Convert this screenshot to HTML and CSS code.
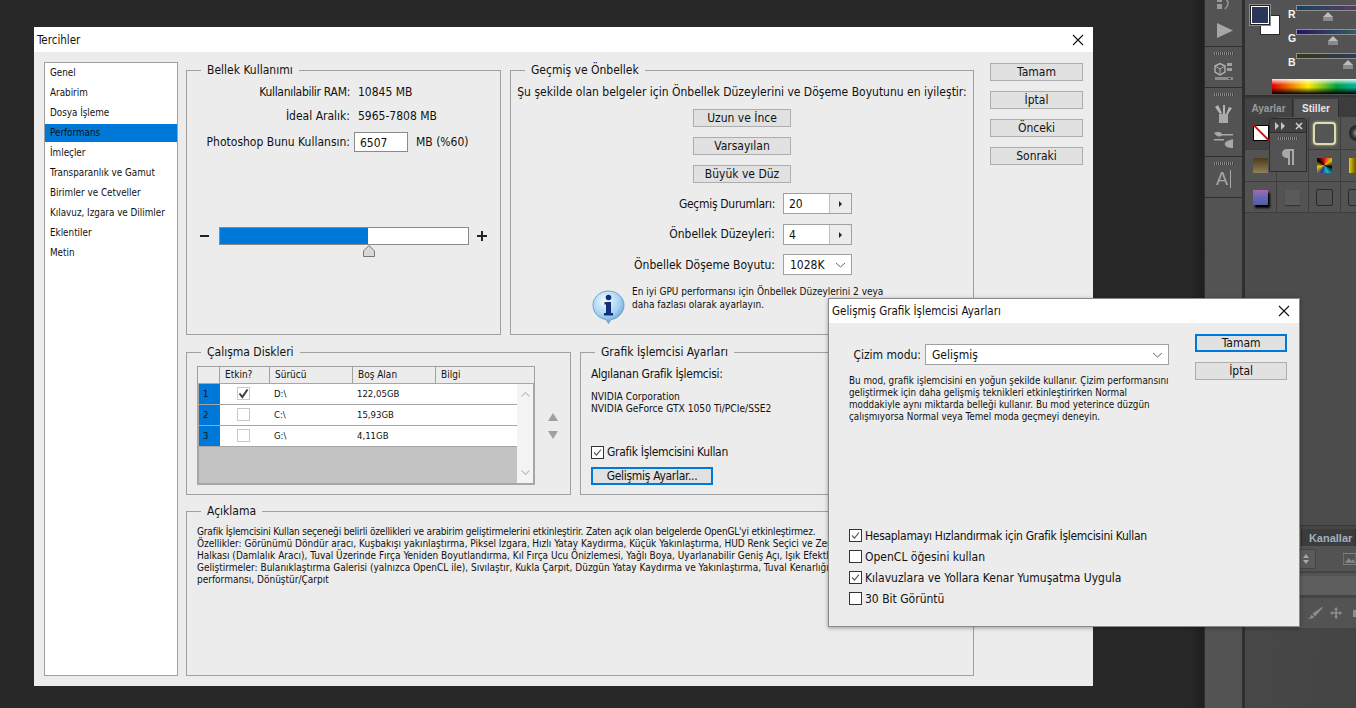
FILE: index.html
```html
<!doctype html>
<html lang="tr">
<head>
  <meta charset="utf-8">
  <title>Tercihler</title>
  <link rel="stylesheet" href="styles.css">
</head>
<body>
<svg class="defs" width="0" height="0">
  <symbol id="tick" viewBox="0 0 13 13"><path d="M2.5 6.5 L5.3 9.5 L10.5 3" fill="none" stroke="#555" stroke-width="1.3"/></symbol>
  <symbol id="tick-bold" viewBox="0 0 13 13"><path d="M2.5 6.5 L5.3 10 L10.5 2.500" fill="none" stroke="#3c3c3c" stroke-width="2"/></symbol>
  <symbol id="close" viewBox="0 0 12 12"><path d="M1 1 L11 11 M11 1 L1 11" fill="none" stroke="#111" stroke-width="1.1"/></symbol>
  <symbol id="chev" viewBox="0 0 11 6"><path d="M1 1 L5.5 5 L10 1" fill="none" stroke="#666" stroke-width="1"/></symbol>
</svg>

<div class="desktop">
  <div class="dock-shade"></div>

  <!-- araç şeridi -->
  <div class="tools">
    <div class="tool-group tg-top">
      <svg width="20" height="12" viewBox="0 0 20 12" class="tool-cut"><path d="M3 0h5v3H3zM3 5h5v5H3z" fill="#9a9a9a"/><path d="M12 0c3 3 3 6-1 10" fill="none" stroke="#9a9a9a" stroke-width="1.5"/></svg>
      <svg width="16" height="15" viewBox="0 0 16 15" class="tool-play"><path d="M0 0 L16 7.5 L0 15z" fill="#a6a6a6"/></svg>
    </div>
    <div class="tool-group tg-3d">
      <div class="grip"></div>
      <svg width="20" height="19" viewBox="0 0 20 19"><path d="M1 4 L6 1.5 L11 4 L11 10 L6 13 L1 10z" fill="none" stroke="#b0b0b0" stroke-width="1.4"/><path d="M1 4 L6 7 L11 4 M6 7 L6 13" fill="none" stroke="#b0b0b0"/><path d="M13 1h5v3h-5zM13 6h5v3h-5z" fill="#a0a0a0"/><path d="M1 15h18v3H1z" fill="#8c8c8c"/><path d="M14 16h3l-1.5 1.5z" fill="#222"/></svg>
    </div>
    <div class="tool-group tg-brush">
      <div class="grip"></div>
      <svg width="20" height="20" viewBox="0 0 20 20"><path d="M5 10h9v9H5z" fill="#a8a8a8"/><path d="M6 10 L1 3 L4 1 L8 9zM9 10 L9 1 L11 1 L11 10zM12 10 L15 3 L18 4 L14 10z" fill="#b4b4b4"/></svg>
      <svg width="20" height="17" viewBox="0 0 20 17"><path d="M0 1c4-2 7-1 8 1h11v1.500H8C6 5 3 5 0 1zM0 7h10v1.500H0zM19 7v9c-5 0-9-2-8-5 1-2 5-3 8-4z" fill="#a8a8a8"/></svg>
    </div>
    <div class="tool-group tg-text">
      <div class="grip"></div>
      <div class="tool-a">A<span class="tool-caret"></span></div>
    </div>
  </div>

  <!-- sağ paneller -->
  <div class="panels">
    <div class="color-panel">
      <div class="swatches">
        <div class="swatch-bg"></div>
        <div class="swatch-fg"></div>
      </div>
      <div class="channels">
        <div class="channel"><span class="channel-name">R</span><div class="channel-track track-r"></div><i class="channel-thumb"></i></div>
        <div class="channel"><span class="channel-name">G</span><div class="channel-track track-g"></div><i class="channel-thumb thumb-g"></i></div>
        <div class="channel"><span class="channel-name">B</span><div class="channel-track track-b"></div><i class="channel-thumb thumb-b"></i></div>
      </div>
      <div class="ramp"></div>
    </div>

    <div class="tabs">
      <span class="tab">Ayarlar</span>
      <span class="tab tab-on">Stiller</span>
    </div>

    <div class="styles-grid">
      <div class="style-cell cell-none"><span class="none-box"></span></div>
      <div class="style-cell"></div>
      <div class="style-cell"><span class="glow-box"></span></div>
      <div class="style-cell"><span class="ball"></span></div>
      <div class="style-cell"><span class="chip chip-brown"></span></div>
      <div class="style-cell"></div>
      <div class="style-cell"><span class="chip chip-mix"></span></div>
      <div class="style-cell"><span class="chip chip-yellow"></span></div>
      <div class="style-cell"><span class="chip chip-purple"></span></div>
      <div class="style-cell"><span class="chip chip-gray"></span></div>
      <div class="style-cell"><span class="chip chip-line"></span></div>
      <div class="style-cell"><span class="chip chip-line"></span></div>
    </div>

    <div class="mini-panel">
      <div class="mini-head">
        <svg width="12" height="8" viewBox="0 0 12 8"><path d="M1 0 L5 4 L1 8zM7 0 L11 4 L7 8z" fill="#c4c4c4"/></svg>
        <svg width="8" height="8" viewBox="0 0 8 8"><path d="M1 1 L7 7 M7 1 L1 7" stroke="#d0d0d0" stroke-width="1.600"/></svg>
      </div>
      <div class="grip mini-grip"></div>
      <svg class="mini-icon" width="12" height="16" viewBox="0 0 12 16"><path d="M5 0h7v16h-2V2H8v14H6V9C2 9 0 7 0 4.500S2 0 5 0z" fill="#a8a8a8"/></svg>
    </div>

    <div class="panel-gap"></div>

    <div class="lower-tabs">
      <span class="tab lower-on"></span>
      <span class="tab tab-channels">Kanallar</span>
    </div>
    <div class="lower-row">
      <span class="updown"><svg width="6" height="10" viewBox="0 0 6 10"><path d="M0 4 L3 0 L6 4zM0 6 L3 10 L6 6z" fill="#a8a8a8"/></svg></span>
      <svg class="pic-icon" width="14" height="12" viewBox="0 0 14 12"><path d="M0 0h14v12H0z" fill="none" stroke="#8a8a8a"/><path d="M2 10 L6 5 L9 8 L11 6 L13 10z" fill="#8a8a8a"/></svg>
    </div>
    <div class="lower-band"></div>
    <div class="lower-tools">
      <svg width="17" height="14" viewBox="0 0 17 14"><path d="M16 0 L17 1 L8 11 L5 8z M4 9 L7 12 C5 14 2 14 0 13 C2 13 3 11 4 9z" fill="#8c8c8c"/></svg>
      <svg width="14" height="14" viewBox="0 0 14 14"><path d="M7 0 L9.500 3H8v3h3V4.500L14 7l-3 2.500V8H8v3h1.500L7 14l-2.500-3H6V8H3v1.500L0 7l3-2.500V6h3V3H4.500z" fill="#8c8c8c"/></svg>
      <span class="tool-stub"></span>
    </div>
    <div class="panel-rest"></div>
  </div>
</div>

<!-- Tercihler penceresi -->
<div class="window prefs">
  <div class="titlebar">
    <span>Tercihler</span>
    <svg class="close" width="12" height="12"><use href="#close"/></svg>
  </div>
  <div class="prefs-body">
    <ul class="side-list">
      <li>Genel</li>
      <li>Arabirim</li>
      <li>Dosya İşleme</li>
      <li class="active">Performans</li>
      <li>İmleçler</li>
      <li>Transparanlık ve Gamut</li>
      <li>Birimler ve Cetveller</li>
      <li>Kılavuz, Izgara ve Dilimler</li>
      <li>Eklentiler</li>
      <li>Metin</li>
    </ul>

    <div class="prefs-main">
      <div class="group-row row-top">
        <fieldset class="group group-memory">
          <legend>Bellek Kullanımı</legend>
          <div class="memory-grid">
            <span class="label tight">Kullanılabilir RAM:</span><span class="value">10845 MB</span>
            <span class="label">İdeal Aralık:</span><span class="value">5965-7808 MB</span>
            <span class="label">Photoshop Bunu Kullansın:</span>
            <span class="memory-input"><span class="textbox">6507</span><span>MB (%60)</span></span>
          </div>
          <div class="slider">
            <svg width="9" height="3" viewBox="0 0 9 3"><path d="M0 0h9v2H0z" fill="#222"/></svg>
            <div class="slider-track">
              <div class="slider-fill" style="width:59.6%"></div>
              <svg class="slider-thumb" width="12" height="12" viewBox="0 0 12 12"><path d="M6 .5 L11.500 6 V11.500 H.5 V6z" fill="#d8d8d8" stroke="#777"/></svg>
            </div>
            <svg class="slider-plus" width="10" height="10" viewBox="0 0 10 10"><path d="M4 0h2v4h4v2H6v4H4V6H0V4h4z" fill="#222"/></svg>
          </div>
        </fieldset>

        <fieldset class="group group-history">
          <legend>Geçmiş ve Önbellek</legend>
          <p class="history-head">Şu şekilde olan belgeler için Önbellek Düzeylerini ve Döşeme Boyutunu en iyileştir:</p>
          <button class="btn btn-preset">Uzun ve İnce</button>
          <button class="btn btn-preset">Varsayılan</button>
          <button class="btn btn-preset">Büyük ve Düz</button>
          <div class="field-grid">
            <span class="label tight">Geçmiş Durumları:</span>
            <span class="spin"><span class="spin-value">20</span><span class="spin-arrow"></span></span>
            <span class="label">Önbellek Düzeyleri:</span>
            <span class="spin"><span class="spin-value">4</span><span class="spin-arrow"></span></span>
            <span class="label">Önbellek Döşeme Boyutu:</span>
            <span class="select select-small">1028K<svg width="11" height="6"><use href="#chev"/></svg></span>
          </div>
          <div class="info-row">
            <svg width="33" height="34" viewBox="0 0 33 34">
              <defs><radialGradient id="bub" cx="40%" cy="30%" r="75%"><stop offset="0" stop-color="#f4fbff"/><stop offset=".6" stop-color="#a9d2f0"/><stop offset="1" stop-color="#5c9bd1"/></radialGradient></defs>
              <path d="M16.500 1C25 1 32 7.500 32 15s-6 14-13 14.500L16.500 33.500 14 29.500C6.500 28.500 1 22.500 1 15S8 1 16.500 1z" fill="url(#bub)" stroke="#6ba3d3"/>
              <circle cx="16.500" cy="7.500" r="2.800" fill="#10307c"/>
              <path d="M12.500 12h6.500v11h2v2.500h-9V23h2V14.500h-1.500z" fill="#10307c"/>
            </svg>
            <p class="small info-text">En iyi GPU performansı için Önbellek Düzeylerini 2 veya<br>daha fazlası olarak ayarlayın.</p>
          </div>
        </fieldset>
      </div>

      <div class="group-row row-mid">
        <fieldset class="group group-disks">
          <legend>Çalışma Diskleri</legend>
          <div class="disks-wrap">
            <div class="disk-table">
              <div class="disk-head">
                <span></span><span>Etkin?</span><span>Sürücü</span><span>Boş Alan</span><span>Bilgi</span>
              </div>
              <div class="disk-body">
                <div class="disk-rows">
                  <div class="disk-row"><span class="disk-num">1</span><span class="disk-on"><span class="disk-check"><svg width="13" height="13"><use href="#tick-bold"/></svg></span></span><span>D:\</span><span>122,05GB</span></div>
                  <div class="disk-row"><span class="disk-num">2</span><span class="disk-on"><span class="disk-check"></span></span><span>C:\</span><span>15,93GB</span></div>
                  <div class="disk-row"><span class="disk-num">3</span><span class="disk-on"><span class="disk-check"></span></span><span>G:\</span><span>4,11GB</span></div>
                </div>
                <div class="disk-scroll">
                  <svg width="9" height="5" viewBox="0 0 9 5"><path d="M.5 4.500 L4.500 .5 L8.500 4.500" fill="none" stroke="#c4c4c4" stroke-width="1.300"/></svg>
                  <svg width="9" height="5" viewBox="0 0 9 5"><path d="M.5 .5 L4.500 4.500 L8.500 .5" fill="none" stroke="#c4c4c4" stroke-width="1.300"/></svg>
                </div>
              </div>
            </div>
            <div class="disk-arrows">
              <svg width="10" height="8" viewBox="0 0 10 8"><path d="M5 0 L10 8 H0z" fill="#a0a0a0"/></svg>
              <svg width="10" height="8" viewBox="0 0 10 8"><path d="M5 8 L10 0 H0z" fill="#a0a0a0"/></svg>
            </div>
          </div>
        </fieldset>

        <fieldset class="group group-gpu">
          <legend>Grafik İşlemcisi Ayarları</legend>
          <div class="gpu-found tight">Algılanan Grafik İşlemcisi:</div>
          <p class="small gpu-name">NVIDIA Corporation<br>NVIDIA GeForce GTX 1050 Ti/PCIe/SSE2</p>
          <label class="check-line gpu-check tight"><span class="check"><svg width="11" height="11"><use href="#tick"/></svg></span>Grafik İşlemcisini Kullan</label>
          <button class="btn btn-focus btn-advanced tight">Gelişmiş Ayarlar...</button>
        </fieldset>
      </div>

      <fieldset class="group group-desc">
        <legend>Açıklama</legend>
        <p class="small desc-text"><span class="desc-first">Grafik İşlemcisini Kullan seçeneği belirli özellikleri ve arabirim geliştirmelerini etkinleştirir. Zaten açık olan belgelerde OpenGL'yi etkinleştirmez.</span><br>Özellikler: Görünümü Döndür aracı, Kuşbakışı yakınlaştırma, Piksel Izgara, Hızlı Yatay Kaydırma, Küçük Yakınlaştırma, HUD Renk Seçici ve Zengin<br>Halkası (Damlalık Aracı), Tuval Üzerinde Fırça Yeniden Boyutlandırma, Kıl Fırça Ucu Önizlemesi, Yağlı Boya, Uyarlanabilir Geniş Açı, Işık Efektleri<br>Geliştirmeler: Bulanıklaştırma Galerisi (yalnızca OpenCL ile), Sıvılaştır, Kukla Çarpıt, Düzgün Yatay Kaydırma ve Yakınlaştırma, Tuval Kenarlığı için<br>performansı, Dönüştür/Çarpıt</p>
      </fieldset>
    </div>

    <div class="prefs-buttons">
      <button class="btn">Tamam</button>
      <button class="btn">İptal</button>
      <button class="btn">Önceki</button>
      <button class="btn">Sonraki</button>
    </div>
  </div>
</div>

<!-- Gelişmiş ayarlar penceresi -->
<div class="window gpu-dialog">
  <div class="titlebar dialog-title">
    <span>Gelişmiş Grafik İşlemcisi Ayarları</span>
    <svg class="close" width="12" height="12"><use href="#close"/></svg>
  </div>
  <div class="dialog-body">
    <div class="dialog-left">
      <div class="mode-row">
        <span class="mode-label">Çizim modu:</span>
        <span class="select">Gelişmiş<svg width="11" height="6"><use href="#chev"/></svg></span>
      </div>
      <p class="small mode-text">Bu mod, grafik işlemcisini en yoğun şekilde kullanır. Çizim performansını<br>geliştirmek için daha gelişmiş teknikleri etkinleştirirken Normal<br>moddakiyle aynı miktarda belleği kullanır. Bu mod yeterince düzgün<br>çalışmıyorsa Normal veya Temel moda geçmeyi deneyin.</p>
      <div class="dialog-checks">
        <label class="check-line tight"><span class="check"><svg width="11" height="11"><use href="#tick"/></svg></span>Hesaplamayı Hızlandırmak için Grafik İşlemcisini Kullan</label>
        <label class="check-line"><span class="check"></span>OpenCL öğesini kullan</label>
        <label class="check-line"><span class="check"><svg width="11" height="11"><use href="#tick"/></svg></span>Kılavuzlara ve Yollara Kenar Yumuşatma Uygula</label>
        <label class="check-line"><span class="check"></span>30 Bit Görüntü</label>
      </div>
    </div>
    <div class="dialog-buttons">
      <button class="btn btn-focus">Tamam</button>
      <button class="btn">İptal</button>
    </div>
  </div>
</div>
</body>
</html>
```

FILE: styles.css
```css
html, body {
  margin: 0;
  padding: 0;
  height: 100%;
  overflow: hidden;
  background: #282828;
}
body {
  font-family: "DejaVu Sans Condensed", "DejaVu Sans", sans-serif;
  font-size: 12px;
  color: #111;
}
p { margin: 0; }
.defs { position: absolute; }
.tight { letter-spacing: -.3px; }

/* arka plan: photoshop */
.desktop {
  height: 708px;
  display: flex;
  justify-content: flex-end;
  overflow: hidden;
}
.dock-shade {
  width: 14px;
  background: linear-gradient(90deg, #282828, #1f1f1f);
}
.tools {
  width: 41px;
  box-sizing: border-box;
  background: #535353;
  border-left: 1px solid #2e2e2e;
  border-right: 3px solid #2f2f2f;
}
.tool-group {
  display: flex;
  flex-direction: column;
  align-items: center;
  border-bottom: 1px solid #2e2e2e;
  box-sizing: border-box;
}
.tg-top { height: 47px; }
.tool-cut { margin-top: -1px; }
.tool-play { margin-top: 12px; margin-left: 2px; }
.tg-3d { height: 41px; gap: 7px; padding-top: 5px; }
.tg-brush { height: 69px; padding-top: 5px; gap: 8px; }
.tg-text { height: 41px; padding-top: 5px; }
.grip {
  width: 20px;
  height: 3px;
  flex: none;
  background: repeating-linear-gradient(90deg, #8a8a8a 0 1px, #3c3c3c 1px 2px);
}
.tool-a {
  font-family: "Liberation Sans", sans-serif;
  font-size: 18px;
  line-height: 20px;
  color: #a8a8a8;
  margin-top: 4px;
  display: flex;
  align-items: center;
}
.tool-caret {
  width: 1px;
  height: 18px;
  background: #a8a8a8;
  margin-left: 2px;
}

.panels {
  width: 111px;
  position: relative;
  display: flex;
  flex-direction: column;
  background: #4d4d4d;
  overflow: hidden;
  font-family: "Liberation Sans", sans-serif;
}
.color-panel {
  height: 97px;
  flex: none;
  box-sizing: border-box;
  background: #535353;
  border-bottom: 2px solid #333;
  position: relative;
}
.swatches {
  position: absolute;
  left: 6px;
  top: 6px;
  width: 32px;
  height: 32px;
}
.swatch-fg {
  position: absolute;
  left: 0;
  top: 0;
  width: 18px;
  height: 18px;
  box-sizing: border-box;
  background: #2d3558;
  border: 1px solid #fff;
  outline: 1px solid #222;
  box-shadow: 0 0 0 2px #8a8a8a;
}
.swatch-bg {
  position: absolute;
  left: 9px;
  top: 9px;
  width: 20px;
  height: 20px;
  box-sizing: border-box;
  background: #fff;
  border: 1px solid #2a2a2a;
}
.channels {
  margin-left: 43px;
  padding-top: 5px;
  display: flex;
  flex-direction: column;
  gap: 7px;
}
.channel {
  height: 17px;
  position: relative;
  display: flex;
  align-items: flex-start;
  color: #f4f4f4;
  font-weight: bold;
  font-size: 10.5px;
}
.channel-name { width: 15px; line-height: 15px; padding-top: 2px; box-sizing: border-box; height: 17px; }
.channel-track {
  width: 70px;
  flex: none;
  height: 4px;
  border: 1px solid #8f8f8f;
}
.track-r { background: linear-gradient(90deg, #12455f, #6b3a5f); }
.track-g { background: linear-gradient(90deg, #2d0f6a, #2d7060); }
.track-b { background: linear-gradient(90deg, #343a10, #2f3a66); }
.channel-thumb {
  position: absolute;
  left: 35px;
  top: 7px;
  width: 0;
  height: 0;
  border: 5px solid transparent;
  border-top: 0;
  border-bottom: 5px solid #bdbdbd;
}
.channel-thumb::after {
  content: "";
  position: absolute;
  left: -5px;
  top: 5px;
  width: 10px;
  height: 4px;
  background: #8a8a8a;
}
.thumb-g { left: 40px; }
.thumb-b { left: 55px; }
.ramp {
  position: absolute;
  left: 27px;
  top: 79px;
  width: 90px;
  height: 15px;
  background:
    linear-gradient(180deg, rgba(255,255,255,.9) 0, rgba(255,255,255,0) 40%, rgba(0,0,0,0) 55%, #000 100%),
    linear-gradient(90deg, #e40000 0, #ffee00 40%, #00a040 72%, #00b8c8 100%);
}
.tabs {
  height: 20px;
  flex: none;
  box-sizing: border-box;
  display: flex;
  align-items: stretch;
  background: #3c3c3c;
  padding-top: 2px;
  gap: 1px;
  font-size: 10px;
  font-weight: bold;
}
.tab {
  background: #444;
  color: #9a9a9a;
  display: flex;
  align-items: center;
  justify-content: center;
  width: 47px;
  border-right: 1px solid #2e2e2e;
}
.tab-on {
  background: #535353;
  color: #e6e6e6;
  width: 44px;
}
.styles-grid {
  flex: none;
  height: 96px;
  width: 128px;
  display: grid;
  grid-template-columns: repeat(4, 32px);
  grid-template-rows: 33px 32px 31px;
  background: #535353;
}
.style-cell {
  box-sizing: border-box;
  border-right: 1px solid #3e3e3e;
  border-bottom: 1px solid #3e3e3e;
  display: flex;
  align-items: center;
  justify-content: center;
}
.cell-none { background: #424242; }
.none-box {
  width: 14px;
  height: 14px;
  border: 1px solid #000;
  background: #fff;
  position: relative;
}
.none-box::after {
  content: "";
  position: absolute;
  left: -5px;
  top: 6px;
  width: 25px;
  height: 2px;
  background: #c81010;
  transform: rotate(45deg);
}
.glow-box {
  width: 19px;
  height: 19px;
  border-radius: 4px;
  background: #555;
  border: 2px solid #dcdcb4;
  box-shadow: 0 0 2px 1px #8a8a68;
}
.ball {
  width: 16px;
  height: 16px;
  border-radius: 50%;
  background: radial-gradient(circle, #aaa 0, #333 45%, #111 100%);
}
.chip { width: 15px; height: 15px; display: block; }
.chip-brown { background: linear-gradient(180deg, #4e3a18, #8f8058); }
.chip-mix { background: conic-gradient(#e01020, #e0c000, #000, #10c0d0, #303090, #e8d000, #000, #e01020); }
.chip-yellow { background: linear-gradient(90deg, #e8d000, #5a4a00, #e8d000); }
.chip-purple { background: linear-gradient(180deg, #a868b0, #5e68b8 55%, #5a5aa0); box-shadow: 2px 3px 2px #000; }
.chip-gray { background: #5a5a5a; box-shadow: 0 1px 1px #333; }
.chip-line { width: 15px; height: 15px; border: 1px solid #2a2a2a; border-radius: 2px; }
.mini-panel {
  position: absolute;
  left: 24px;
  top: 118px;
  width: 38px;
  height: 54px;
  box-sizing: border-box;
  background: #535353;
  border: 1px solid #2c2c2c;
  border-radius: 3px 3px 0 0;
  display: flex;
  flex-direction: column;
  align-items: center;
}
.mini-head {
  width: 100%;
  height: 13px;
  flex: none;
  background: #424242;
  border-bottom: 1px solid #2c2c2c;
  display: flex;
  align-items: center;
  justify-content: center;
  gap: 9px;
}
.mini-grip { margin-top: 4px; }
.mini-icon { margin-top: 9px; }
.panel-gap { height: 312px; flex: none; background: #4c4c4c; }
.lower-tabs {
  height: 21px;
  flex: none;
  box-sizing: border-box;
  display: flex;
  padding-top: 3px;
  background: #454545;
  border-top: 1px solid #3a3a3a;
}
.lower-on { width: 63px; background: #535353; }
.tab-channels {
  width: 60px;
  box-sizing: border-box;
  justify-content: flex-start;
  padding-left: 7px;
  background: #3c3c3c;
  color: #9fb0c0;
  font-size: 11px;
  font-weight: bold;
}
.lower-row {
  height: 27px;
  flex: none;
  box-sizing: border-box;
  background: #535353;
  border-bottom: 2px solid #444;
  display: flex;
  align-items: center;
}
.updown {
  margin-left: 53px;
  width: 19px;
  height: 20px;
  box-sizing: border-box;
  background: #5a5a5a;
  border: 1px solid #444;
  border-left: 0;
  border-radius: 0 2px 2px 0;
  display: flex;
  align-items: center;
  justify-content: center;
}
.pic-icon { margin-left: 27px; }
.lower-band {
  height: 25px;
  flex: none;
  box-sizing: border-box;
  background: #5e5e5e;
  border-top: 3px solid #535353;
  border-bottom: 3px solid #454545;
}
.lower-tools {
  height: 32px;
  flex: none;
  box-sizing: border-box;
  background: #535353;
  border-bottom: 2px solid #444;
  display: flex;
  align-items: center;
  padding-left: 63px;
  gap: 7px;
}
.tool-stub {
  width: 3px;
  height: 7px;
  margin-left: 4px;
  background: #8c8c8c;
  flex: none;
}
.panel-rest {
  flex: 1;
  background: linear-gradient(100deg, #484848, #444);
}

/* pencereler */
.window {
  position: absolute;
  box-sizing: border-box;
  background: #ececec;
}
.prefs {
  left: 34px;
  top: 27px;
  width: 1059px;
  height: 659px;
}
.gpu-dialog {
  left: 828px;
  top: 298px;
  width: 472px;
  height: 329px;
  border: 1px solid #8a8a8a;
  box-shadow: 0 1px 4px rgba(0,0,0,.35);
}
.titlebar {
  height: 25px;
  box-sizing: border-box;
  background: #fff;
  display: flex;
  align-items: center;
  justify-content: space-between;
  padding: 0 9px 0 3px;
  font-size: 11.5px;
}
.dialog-title { height: 24px; }
.close { display: block; }

.prefs-body {
  display: flex;
  padding: 10px;
  height: 634px;
  box-sizing: border-box;
}
.side-list {
  list-style: none;
  margin: 0;
  padding: 1px 0 0;
  width: 134px;
  box-sizing: border-box;
  flex: none;
  background: #fff;
  border: 1px solid #a0a0a0;
  font-size: 9.8px;
}
.side-list li {
  height: 20px;
  line-height: 18px;
  padding-left: 5px;
  box-sizing: border-box;
}
.side-list .active { background: #0078d7; height: 18px; margin-bottom: 2px; }
.prefs-main {
  width: 788px;
  margin: 1px 0 0 8px;
  flex: none;
  display: flex;
  flex-direction: column;
}
.prefs-buttons {
  width: 93px;
  margin-left: 16px;
  padding-top: 1px;
  display: flex;
  flex-direction: column;
  gap: 10px;
}
.group-row {
  display: flex;
  gap: 9px;
}
.row-top { height: 272px; }
.row-mid { height: 150px; margin-top: 10px; }
.group {
  margin: 0;
  padding: 0;
  min-width: 0;
  box-sizing: border-box;
  border: 1px solid #a0a0a0;
  overflow: hidden;
}
.group legend {
  margin-left: 14px;
  padding: 0 6px;
  line-height: 14px;
}
.label { text-align: right; }
.small { font-size: 10px; line-height: 12px; }

.btn {
  height: 18px;
  padding: 0;
  margin: 0;
  box-sizing: border-box;
  background: #e1e1e1;
  border: 1px solid #adadad;
  font: inherit;
  color: #111;
  display: block;
}
.btn-focus { border: 2px solid #0078d7; }

/* bellek */
.group-memory { width: 315px; }
.memory-grid {
  display: grid;
  grid-template-columns: 163px auto;
  grid-template-rows: 16px 16px 20px;
  column-gap: 4px;
  row-gap: 8px;
  padding-top: 7px;
  align-items: center;
}
.value { padding-left: 4px; }
.memory-input {
  display: flex;
  align-items: center;
  gap: 8px;
  height: 20px;
}
.textbox {
  width: 54px;
  height: 20px;
  box-sizing: border-box;
  background: #fff;
  border: 1px solid #8a8a8a;
  padding-left: 5px;
  line-height: 20px;
}
.slider {
  margin: 75px 0 0 13px;
  display: flex;
  align-items: center;
  gap: 10px;
}
.slider-plus { margin-left: -2px; }
.slider-track {
  width: 250px;
  height: 18px;
  box-sizing: border-box;
  background: #fff;
  border: 1px solid #8a8a8a;
  position: relative;
}
.slider-fill { height: 100%; background: #0078d7; }
.slider-thumb { position: absolute; left: 143px; top: 17px; }

/* gecmis */
.group-history {
  width: 464px;
  display: flex;
  flex-direction: column;
  align-items: center;
}
.history-head {
  line-height: 14px;
  margin-top: 8px;
  margin-bottom: 10px;
  white-space: nowrap;
}
.btn-preset { width: 98px; margin-bottom: 10px; }
.field-grid {
  align-self: flex-start;
  display: grid;
  grid-template-columns: 264px 69px;
  grid-template-rows: 21px 20px 21px;
  column-gap: 8px;
  row-gap: 10px;
  align-items: center;
}
.spin, .select {
  display: flex;
  height: 21px;
  box-sizing: border-box;
  background: #fff;
  border: 1px solid #a0a0a0;
  align-items: center;
}
.field-grid .spin, .field-grid .select { align-self: start; }
.spin-value { flex: 1; padding-left: 5px; }
.spin-arrow {
  width: 22px;
  height: 100%;
  box-sizing: border-box;
  background: #ececec;
  border-left: 1px solid #c0c0c0;
  position: relative;
}
.spin-arrow::after {
  content: "";
  position: absolute;
  left: 9px;
  top: 7px;
  border-left: 3px solid #222;
  border-top: 3px solid transparent;
  border-bottom: 3px solid transparent;
}
.select {
  flex: 1;
  justify-content: space-between;
  padding: 0 5px 0 6px;
}
.info-row {
  align-self: flex-start;
  display: flex;
  gap: 7px;
  margin: 10px 0 0 81px;
}
.info-row svg { margin-top: 5px; }
.info-text { line-height: 13px; white-space: nowrap; }

/* diskler */
.group-disks { width: 385px; }
.disks-wrap {
  display: flex;
  align-items: center;
  padding: 7px 0 0 10px;
}
.disk-table { width: 338px; font-size: 9.5px; }
.disk-head {
  display: grid;
  grid-template-columns: 22px 50px 83px 83px 1fr;
  height: 17px;
  box-sizing: border-box;
  border: 1px solid #a0a0a0;
  border-bottom: 0;
  line-height: 15px;
  font-size: 10px;
}
.disk-head span { padding-left: 5px; border-right: 1px solid #a0a0a0; }
.disk-head span:last-child { border-right: 0; }
.disk-body {
  height: 102px;
  box-sizing: border-box;
  border: 2px solid #a6a6a6;
  border-top-width: 1px;
  display: flex;
  background: #c3c3c3;
}
.disk-rows { flex: 1; }
.disk-row {
  display: grid;
  grid-template-columns: 21px 50px 83px 1fr;
  height: 21px;
  box-sizing: border-box;
  background: #fff;
  border-bottom: 1px solid #a6a6a6;
  line-height: 20px;
}
.disk-row span:nth-child(3), .disk-row span:nth-child(4) { padding-left: 4px; }
.disk-on { padding-right: 4px; text-align: center; }
.disk-num {
  background: #0078d7;
  padding-left: 4px;
}
.disk-check {
  display: inline-block;
  width: 13px;
  height: 13px;
  box-sizing: border-box;
  border: 1px solid #c8c8c8;
  vertical-align: -3px;
  background: #fff;
}
.disk-check svg { display: block; margin: -1px; }
.disk-scroll {
  width: 16px;
  flex: none;
  background: #f4f4f4;
  display: flex;
  flex-direction: column;
  justify-content: space-between;
  align-items: center;
  padding: 8px 0;
  box-sizing: border-box;
}
.disk-arrows {
  margin-left: 13px;
  display: flex;
  flex-direction: column;
  gap: 10px;
}

/* grafik */
.group-gpu { width: 394px; padding-left: 10px; }
.group-gpu legend { margin-left: 4px; }
.gpu-found { margin-top: 8px; line-height: 14px; }
.gpu-name { margin-top: 10px; font-size: 10.2px; }
.check-line {
  display: flex;
  align-items: center;
  gap: 3px;
  white-space: nowrap;
}
.check {
  width: 13px;
  height: 13px;
  box-sizing: border-box;
  flex: none;
  background: #fff;
  border: 1px solid #333;
  display: block;
}
.check svg { display: block; }
.gpu-check { margin-top: 30px; height: 14px; }
.btn-advanced { width: 122px; margin-top: 8px; }

/* aciklama */
.group-desc { height: 172px; margin-top: 9px; }
.desc-text {
  padding: 8px 0 0 10px;
  white-space: nowrap;
}
.desc-first { letter-spacing: -.18px; }

/* diyalog */
.dialog-body {
  height: 303px;
  box-sizing: border-box;
  display: flex;
  padding: 11px 12px 0 20px;
}
.dialog-left {
  width: 321px;
  display: flex;
  flex-direction: column;
}
.mode-row {
  display: flex;
  align-items: center;
  gap: 4px;
  margin-top: 10px;
}
.mode-label { width: 72px; text-align: right; flex: none; }
.mode-text { margin-top: 10px; white-space: nowrap; font-size: 9.8px; }
.dialog-checks {
  margin-top: auto;
  padding-bottom: 17px;
}
.dialog-checks .check-line { height: 21px; }
.dialog-buttons {
  width: 92px;
  margin-left: 26px;
  display: flex;
  flex-direction: column;
  gap: 10px;
}
```
